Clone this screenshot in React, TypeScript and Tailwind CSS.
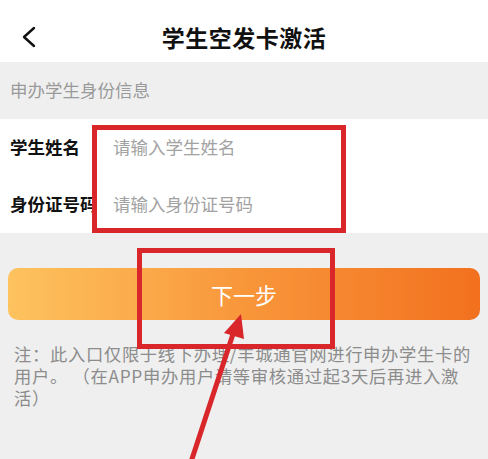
export default function App() {
  return (
    <div
      className="relative w-[488px] h-[459px] overflow-hidden bg-[#efefef]"
      style={{ fontFamily: '"Noto Sans CJK SC", "Noto Sans", sans-serif' }}
    >
      {/* 顶部导航 */}
      <div className="relative h-[62px] bg-white flex items-center justify-center">
        <svg className="absolute left-[21px] top-[26px]" width="16" height="22" viewBox="0 0 16 22">
          <path d="M13 2 L3 11 L13 20" fill="none" stroke="#111" strokeWidth="2.4" strokeLinecap="round" strokeLinejoin="round" />
        </svg>
        <span className="text-[23px] font-bold text-[#111] tracking-[0.5px] mt-[12px]">学生空发卡激活</span>
      </div>

      {/* 分组标题 */}
      <div className="h-[57px] flex items-center pl-[10px] text-[17.5px] text-[#9a9a9a]">申办学生身份信息</div>

      {/* 表单 */}
      <div className="bg-white">
        <div className="h-[57px] flex items-center">
          <span className="w-[113px] shrink-0 pl-[10px] text-[17.5px] font-bold text-[#111] whitespace-nowrap">学生姓名</span>
          <span className="text-[17.5px] text-[#a2a2a2]">请输入学生姓名</span>
        </div>
        <div className="h-[57px] flex items-center">
          <span className="w-[113px] shrink-0 pl-[10px] text-[17.5px] font-bold text-[#111] whitespace-nowrap">身份证号码</span>
          <span className="text-[17.5px] text-[#a2a2a2]">请输入身份证号码</span>
        </div>
      </div>

      {/* 按钮 */}
      <div className="mt-[35px] mx-[8px] h-[52px] rounded-[10px] bg-gradient-to-r from-[#fdc35e] via-[#f8963a] to-[#f2701e] flex items-center justify-center">
        <span className="text-[22px] text-white">下一步</span>
      </div>

      {/* 说明 */}
      <div className="mt-[23px] px-[14px] text-[17.3px] leading-[22px] tracking-[0.7px] text-[#8c8c8c] whitespace-pre">
        <div>注：此入口仅限于线下办理/丰城通官网进行申办学生卡的</div>
        <div>用户。 （在APP申办用户请等审核通过起3天后再进入激</div>
        <div>活）</div>
      </div>

      {/* 标注红框 */}
      <div className="absolute left-[92px] top-[125px] w-[254px] h-[108px] border-[5px] border-[#d8262a]" />
      <div className="absolute left-[137px] top-[248px] w-[198px] h-[101px] border-[5px] border-[#d8262a]" />

      {/* 标注箭头 */}
      <svg className="absolute left-0 top-0" width="488" height="459" viewBox="0 0 488 459">
        <line x1="191" y1="462" x2="235" y2="328" stroke="#d8262a" strokeWidth="5" />
        <polygon points="241,314 224,333 244,339" fill="#d8262a" />
      </svg>
    </div>
  )
}
